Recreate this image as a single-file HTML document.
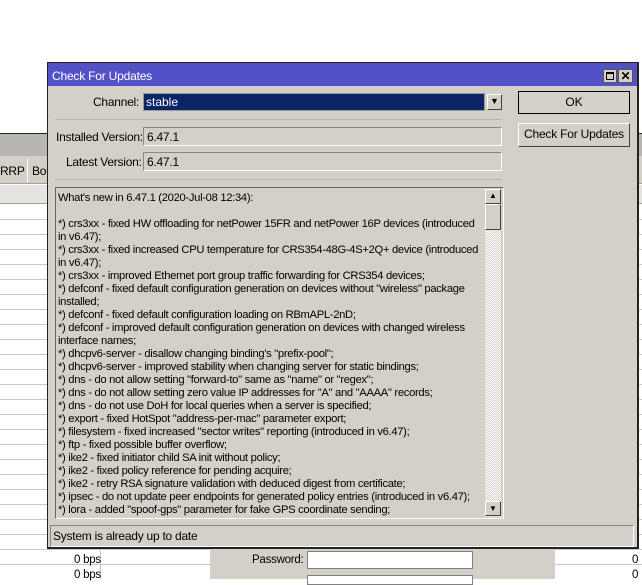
<!DOCTYPE html>
<html><head><style>
*{margin:0;padding:0;box-sizing:border-box}
body{width:642px;height:579px;background:#fff;position:relative;overflow:hidden;font-family:"Liberation Sans",sans-serif;font-size:12px;color:#000}
.a{position:absolute}
.t{font-size:11.5px;letter-spacing:-0.25px;white-space:nowrap}
.field{background:#d4d0c8;border:1px solid #8a8782;border-right-color:#fff;border-bottom-color:#fff}
.btn{background:#d4d0c8;border:1px solid #fff;border-right-color:#404040;border-bottom-color:#404040;text-align:center}
</style></head><body>
<div class="a" style="left:0;top:133px;width:642px;height:1px;background:#222"></div>
<div class="a" style="left:0;top:134px;width:642px;height:22px;background:#b8b6b2"></div>
<div class="a" style="left:0;top:156px;width:642px;height:28px;background:#d4d0c8;border-bottom:1px solid #a0a0a0"></div>
<div class="a t" style="left:0;top:164px;font-size:12px">RRP</div>
<div class="a" style="left:27px;top:158px;width:1px;height:24px;background:#fff"></div>
<div class="a t" style="left:32px;top:164px;font-size:12px">Bor</div>
<div class="a" style="left:0;top:185px;width:642px;height:19px;background:#e6e4e0;border-bottom:1px solid #a0a0a0"></div>
<div class="a" style="left:0;top:205px;width:642px;height:374px;background:repeating-linear-gradient(#fff 0 14px,#c8c8c8 14px 15px)"></div>
<div class="a" style="left:100px;top:540px;width:1px;height:39px;background:#c8c8c8"></div>
<div class="a t" style="left:74px;top:554px">0 bps</div>
<div class="a t" style="left:74px;top:569px">0 bps</div>
<div class="a" style="left:210px;top:548px;width:345px;height:31px;background:#d4d0c8;border-top:1px solid #222"></div>
<div class="a t" style="left:252px;top:554px">Password:</div>
<div class="a" style="left:307px;top:551px;width:166px;height:18px;background:#fff;border:1px solid #808080"></div>
<div class="a" style="left:307px;top:575px;width:166px;height:10px;background:#fff;border:1px solid #808080"></div>
<div class="a t" style="left:632px;top:554px">0</div>
<div class="a t" style="left:632px;top:569px">0</div>
<div class="a" style="left:47px;top:62px;width:592px;height:487px;background:#d4d0c8;border:1px solid #222;border-right:2px solid #222;border-bottom:2px solid #222"></div>
<div class="a" style="left:48px;top:63px;width:589px;height:23px;background:#5252c6"></div>
<div class="a" style="left:52px;top:69px;color:#fff;font-size:12px;letter-spacing:-0.2px">Check For Updates</div>
<div class="a" style="left:603px;top:69px;width:14px;height:14px;background:#d4d0c8;border:1px solid #555"><div style="margin:2px;width:8px;height:8px;border:1px solid #000;border-top-width:2px"></div></div>
<div class="a" style="left:618px;top:69px;width:15px;height:14px;background:#d4d0c8;border:1px solid #555;font-size:12px;font-weight:bold;line-height:12px;text-align:center">✕</div>
<div class="a t" style="left:93px;top:95px;font-size:12px">Channel:</div>
<div class="a" style="left:143px;top:93px;width:342px;height:18px;background:#0a2466;border:1px solid #999"></div>
<div class="a" style="left:146px;top:95px;color:#fff;font-size:12px">stable</div>
<div class="a btn" style="left:487px;top:94px;width:15px;height:16px;font-size:9px;line-height:13px">&#9660;</div>
<div class="a" style="left:55px;top:119px;width:447px;height:1px;background:#b8b4ac"></div>
<div class="a t" style="left:56px;top:130px;font-size:12px">Installed Version:</div>
<div class="a field" style="left:143px;top:127px;width:359px;height:19px"></div>
<div class="a t" style="left:147px;top:130px;font-size:12px">6.47.1</div>
<div class="a t" style="left:66px;top:155px;font-size:12px">Latest Version:</div>
<div class="a field" style="left:143px;top:152px;width:359px;height:19px"></div>
<div class="a t" style="left:147px;top:155px;font-size:12px">6.47.1</div>
<div class="a" style="left:55px;top:179px;width:447px;height:1px;background:#b8b4ac"></div>
<div class="a" style="left:518px;top:91px;width:112px;height:23px;border:1px solid #000;background:#d4d0c8;text-align:center;line-height:20px;font-size:12px">OK</div>
<div class="a btn" style="left:518px;top:123px;width:112px;height:24px;line-height:21px;font-size:12px;letter-spacing:-0.2px">Check For Updates</div>
<div class="a" style="left:55px;top:187px;width:449px;height:332px;background:#d4d0c8;border:1px solid #666;border-right-color:#fff;border-bottom-color:#fff"></div>
<div class="a" style="left:485px;top:189px;width:16px;height:328px;background:repeating-conic-gradient(#d4d0c8 0 25%,#fff 0 50%) 0 0/2px 2px"></div>
<div class="a btn" style="left:485px;top:189px;width:16px;height:15px;font-size:8px;line-height:12px">&#9650;</div>
<div class="a btn" style="left:485px;top:204px;width:16px;height:26px"></div>
<div class="a btn" style="left:485px;top:501px;width:16px;height:15px;font-size:8px;line-height:13px">&#9660;</div>
<div class="a t" style="left:58px;top:192px;line-height:13px;font-size:11.2px;letter-spacing:-0.3px">What's new in 6.47.1 (2020-Jul-08 12:34):<br>&nbsp;<br>*) crs3xx - fixed HW offloading for netPower 15FR and netPower 16P devices (introduced<br>in v6.47);<br>*) crs3xx - fixed increased CPU temperature for CRS354-48G-4S+2Q+ device (introduced<br>in v6.47);<br>*) crs3xx - improved Ethernet port group traffic forwarding for CRS354 devices;<br>*) defconf - fixed default configuration generation on devices without "wireless" package<br>installed;<br>*) defconf - fixed default configuration loading on RBmAPL-2nD;<br>*) defconf - improved default configuration generation on devices with changed wireless<br>interface names;<br>*) dhcpv6-server - disallow changing binding's "prefix-pool";<br>*) dhcpv6-server - improved stability when changing server for static bindings;<br>*) dns - do not allow setting "forward-to" same as "name" or "regex";<br>*) dns - do not allow setting zero value IP addresses for "A" and "AAAA" records;<br>*) dns - do not use DoH for local queries when a server is specified;<br>*) export - fixed HotSpot "address-per-mac" parameter export;<br>*) filesystem - fixed increased "sector writes" reporting (introduced in v6.47);<br>*) ftp - fixed possible buffer overflow;<br>*) ike2 - fixed initiator child SA init without policy;<br>*) ike2 - fixed policy reference for pending acquire;<br>*) ike2 - retry RSA signature validation with deduced digest from certificate;<br>*) ipsec - do not update peer endpoints for generated policy entries (introduced in v6.47);<br>*) lora - added "spoof-gps" parameter for fake GPS coordinate sending;</div>
<div class="a" style="left:50px;top:525px;width:584px;height:22px;border:1px solid #8a8782;border-right-color:#fff;border-bottom-color:#fff"></div>
<div class="a t" style="left:53px;top:529px;font-size:12px">System is already up to date</div>
</body></html>
